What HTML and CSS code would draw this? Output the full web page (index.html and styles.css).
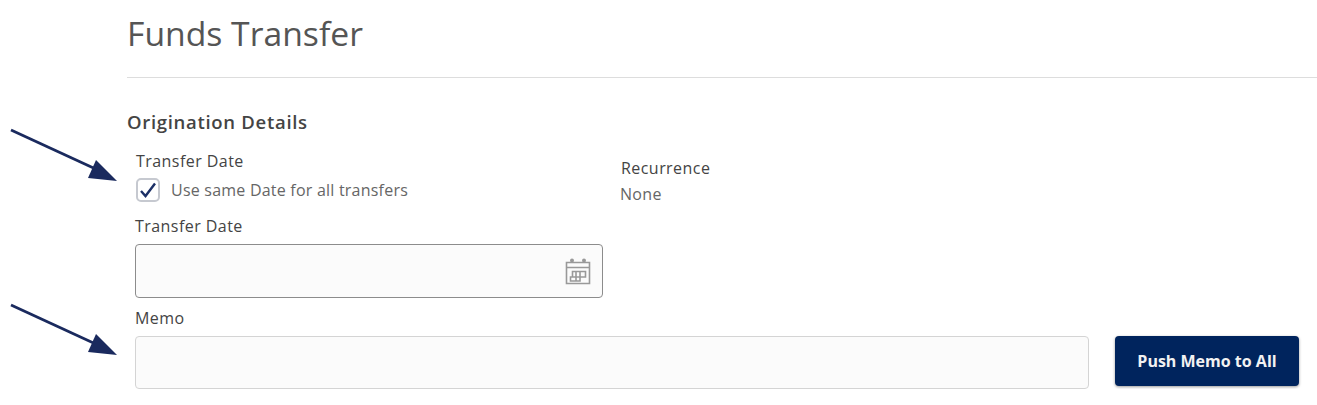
FILE: index.html
```html
<!doctype html>
<html>
<head>
    <title>Funds Transfer</title>
    <meta charset="utf-8" />
    <link rel="stylesheet" href="styles.css">
</head>
<body>
<svg class="arrows" width="130" height="405" viewBox="0 0 130 405">
    <line x1="11" y1="130" x2="100" y2="171" />
    <polygon points="96,160 88,178 117,181" />
    <line x1="11" y1="305" x2="100" y2="346" />
    <polygon points="96,334 88,352 117,355" />
</svg>
<div class="page">
    <h1>Funds Transfer</h1>
    <h2>Origination Details</h2>
    <div class="top-row">
        <div class="date-col">
            <div class="label first-label">Transfer Date</div>
            <label class="check-row">
                <span class="checkbox">
                    <svg width="18" height="18" viewBox="0 0 18 18"><path d="M2 10 L6.5 15 L16 2.5" /></svg>
                </span>
                Use same Date for all transfers
            </label>
            <div class="label date-label">Transfer Date</div>
            <div class="input date-input">
                <svg class="cal" width="28" height="28" viewBox="0 0 28 28">
                    <path d="M2.5 5.5 H25.5 V26.5 H2.5 Z M2.5 10.5 H25.5" />
                    <path d="M8.5 14.5 H21.5 V20 H8.5 Z M6.5 20 H16 V24 H6.5 Z M12 14.5 V24 M16 14.5 V20" />
                    <circle cx="8" cy="3.5" r="2" />
                    <circle cx="20" cy="3.5" r="2" />
                </svg>
            </div>
        </div>
        <div class="recurrence">
            <div class="label">Recurrence</div>
            <div class="value">None</div>
        </div>
    </div>
    <div class="label memo-label">Memo</div>
    <div class="memo-row">
        <div class="input memo-input"></div>
        <button>Push Memo to All</button>
    </div>
</div>
</body>
</html>
```

FILE: styles.css
```css
body        { margin:0; background-color:#fff; color:#555; font-family:"Open Sans", sans-serif; }
.arrows     { position:absolute; left:0; top:0; }
.arrows line    { stroke:#1a2a5e; stroke-width:2.8; }
.arrows polygon { fill:#1a2a5e; }
.page       { padding:0 0 0 127px; }
h1          { margin:0; padding:10px 0 21px 0; height:46px; font-size:33.7px; line-height:46px; font-weight:400; color:#555; border-bottom:1px solid #ddd; }
h2          { margin:32px 0 0 0; font-size:18.5px; line-height:24px; font-weight:600; letter-spacing:.7px; color:#444; }
.top-row    { display:flex; padding-left:8px; }
.date-col   { width:468px; }
.label      { font-size:16px; line-height:20px; letter-spacing:.45px; color:#444; }
.first-label { margin-top:17px; padding-left:1px; }
.check-row  { display:flex; align-items:center; gap:11px; margin-top:7px; font-size:16px; line-height:24px; letter-spacing:.22px; color:#666; }
.checkbox   { display:flex; align-items:center; justify-content:center; box-sizing:border-box; width:24px; height:24px; margin-left:1px; border:2px solid #c6c9d0; border-radius:5px; }
.checkbox path { fill:none; stroke:#1b2f66; stroke-width:2.4; }
.date-label { margin-top:14px; }
.input      { box-sizing:border-box; background-color:#fbfbfb; border-radius:4px; }
.date-input { display:flex; align-items:center; justify-content:flex-end; height:54px; margin-top:8px; padding-right:10px; border:1px solid #8c8c8c; }
.cal path   { fill:none; stroke:#999; stroke-width:1.6; }
.cal circle { fill:#999; }
.recurrence { padding-top:24px; margin-left:18px; }
.value      { margin-top:6px; margin-left:-1px; font-size:16px; line-height:20px; letter-spacing:.3px; color:#666; }
.memo-label { margin:10px 0 0 8px; }
.memo-row   { display:flex; align-items:flex-start; gap:26px; margin-top:8px; padding-left:8px; }
.memo-input { width:954px; height:53px; border:1px solid #d4d4d4; }
button      { width:184px; height:50px; padding:0; background-color:#00245d; color:#f2f2f2; border:none; border-radius:4px; box-shadow:0 1px 3px rgba(0,0,0,.4); font-family:"Open Sans", sans-serif; font-size:16px; font-weight:700; }
```
